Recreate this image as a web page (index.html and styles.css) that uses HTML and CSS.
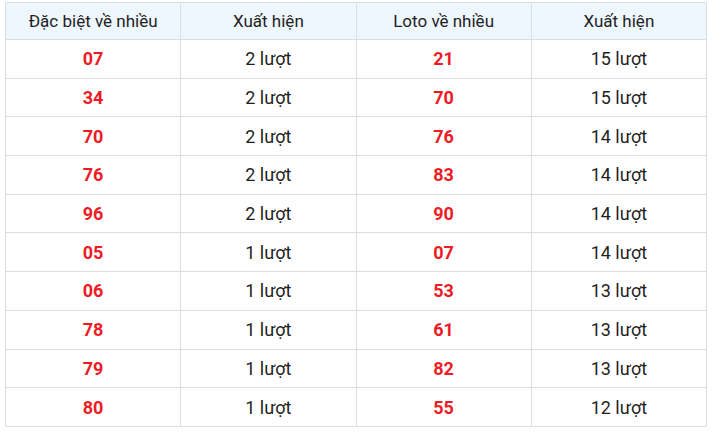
FILE: index.html
```html
<!DOCTYPE html>
<html lang="vi">
<head>
<meta charset="utf-8">
<link rel="stylesheet" href="styles.css">
</head>
<body>
<table class="stats">
  <thead>
    <tr><th>Đặc biệt về nhiều</th><th>Xuất hiện</th><th>Loto về nhiều</th><th>Xuất hiện</th></tr>
  </thead>
  <tbody>
    <tr><td class="num">07</td><td>2 lượt</td><td class="num">21</td><td>15 lượt</td></tr>
    <tr><td class="num">34</td><td>2 lượt</td><td class="num">70</td><td>15 lượt</td></tr>
    <tr><td class="num">70</td><td>2 lượt</td><td class="num">76</td><td>14 lượt</td></tr>
    <tr><td class="num">76</td><td>2 lượt</td><td class="num">83</td><td>14 lượt</td></tr>
    <tr><td class="num">96</td><td>2 lượt</td><td class="num">90</td><td>14 lượt</td></tr>
    <tr><td class="num">05</td><td>1 lượt</td><td class="num">07</td><td>14 lượt</td></tr>
    <tr><td class="num">06</td><td>1 lượt</td><td class="num">53</td><td>13 lượt</td></tr>
    <tr><td class="num">78</td><td>1 lượt</td><td class="num">61</td><td>13 lượt</td></tr>
    <tr><td class="num">79</td><td>1 lượt</td><td class="num">82</td><td>13 lượt</td></tr>
    <tr><td class="num">80</td><td>1 lượt</td><td class="num">55</td><td>12 lượt</td></tr>
  </tbody>
</table>
</body>
</html>
```
FILE: styles.css
```css
html, body {
  margin: 0;
  padding: 0;
  background: #fff;
}
body {
  padding: 2px 0 0 5px;
  font-family: Roboto, "Noto Sans", Arial, sans-serif;
  color: #1f1f1f;
}
.stats {
  width: 702px;
  border-collapse: collapse;
  table-layout: fixed;
}
.stats th, .stats td {
  border: 1px solid #dcdde2;
  text-align: center;
  vertical-align: middle;
  padding: 0;
  font-size: 18px;
}
.stats th {
  background: #eef6fe;
  font-weight: 400;
  font-size: 17px;
  height: 36px;
  color: #1f1f1f;
}
.stats td {
  height: 37.7px;
}
.stats td.num {
  color: #ee1c25;
  font-weight: 700;
  font-size: 18px;
}
```
